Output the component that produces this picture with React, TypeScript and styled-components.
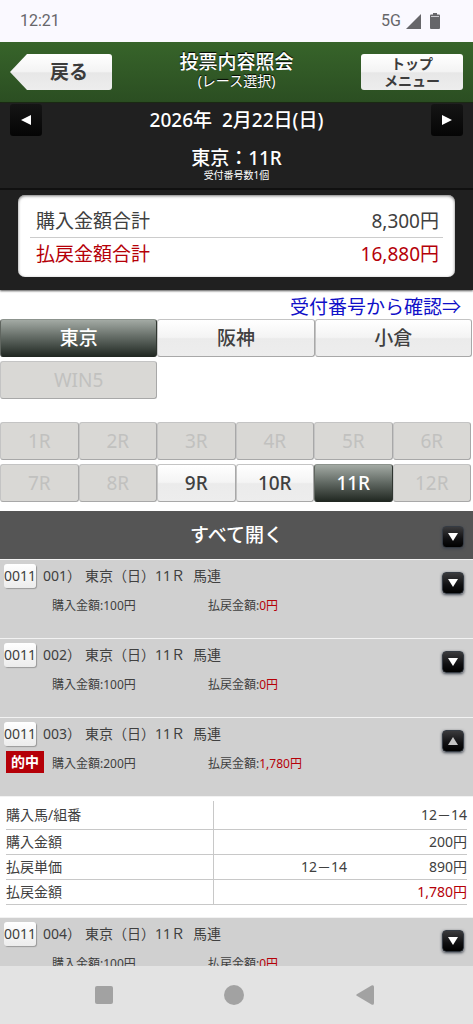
import React, { useState } from "react";
import styled, { createGlobalStyle, css } from "styled-components";

const sans = `"Noto Sans", "Noto Sans CJK JP", sans-serif`;
const RED = "#b50008";
const INK = "#404040";

const GlobalStyle = createGlobalStyle`
  *, *::before, *::after { box-sizing: border-box; }
  body { margin: 0; background: #fff; font-family: ${sans}; color: ${INK}; }
  button { font-family: inherit; padding: 0; margin: 0; border: 0; cursor: pointer; }
  h1, h2, p, dl, dd, ul { margin: 0; padding: 0; font-weight: 400; }
  ul { list-style: none; }
`;

const Screen = styled.div`
  display: flex;
  flex-direction: column;
  height: 100vh;
`;

const StatusBar = styled.div`
  flex: none;
  display: flex;
  align-items: center;
  justify-content: space-between;
  height: 42px;
  padding: 0 33px 0 20px;
  background: #faf9ff;
  color: #66666a;
  font: 16px/20px Roboto, sans-serif;
`;

const StatusIcons = styled.div`
  display: flex;
  align-items: center;
  gap: 5px;
  svg + svg { margin-left: 4px; }
`;

const Content = styled.main`
  flex: 1;
  min-height: 0;
  overflow: hidden;
`;

const Header = styled.header`
  display: flex;
  align-items: center;
  justify-content: space-between;
  height: 61px;
  padding: 0 10px;
  background: linear-gradient(#37642a, #2b4e22);
  border-bottom: 1px solid #16260f;
`;

const plate = css`
  height: 36px;
  border-radius: 3px;
  background: linear-gradient(#fff 0, #f3f3f3 50%, #e7e7e7 52%, #ededed 100%);
  color: #3c3c3c;
  font-weight: 700;
`;

const BackButton = styled.button`
  ${plate}
  width: 102px;
  padding-left: 16px;
  clip-path: polygon(0 50%, 17px 0, 100% 0, 100% 100%, 17px 100%);
  font-size: 19px;
  line-height: 36px;
`;

const MenuButton = styled.button`
  ${plate}
  width: 102px;
  font-size: 14px;
  line-height: 17px;
`;

const TitleBlock = styled.div`
  padding-bottom: 4px;
  text-align: center;
  color: #fff;
  text-shadow: 0 -1px 1px #000;
  h1 { font-size: 19px; line-height: 22px; font-weight: 500; }
  p { font-size: 14px; line-height: 16px; }
`;

const Summary = styled.section`
  background: #202020;
  color: #fff;
  box-shadow: 0 1px 2px #555;
`;

const DateRow = styled.div`
  display: flex;
  align-items: flex-start;
  justify-content: space-between;
  padding: 1px 10px 0;
  h2 { font-size: 19px; line-height: 32px; white-space: pre; font-weight: 500; }
`;

const DayButton = styled.button`
  display: grid;
  place-items: center;
  width: 32px;
  height: 32px;
  border-radius: 3px;
  background: linear-gradient(#151515, #050505);
`;

const RaceHeading = styled.div`
  padding: 11px 0 7px;
  text-align: center;
  border-bottom: 2px solid #101010;
  h2 { font-size: 19px; line-height: 22px; font-weight: 500; }
  p { font-size: 10px; line-height: 12px; }
`;

const TotalsWrap = styled.div`
  padding: 5px 18px 13px;
`;

const Totals = styled.dl`
  padding: 10px 12px 7px;
  border-radius: 7px;
  background: #fff;
  box-shadow: inset 0 1px 3px #777;
`;

const TotalRow = styled.div<{ $paid?: boolean }>`
  display: flex;
  justify-content: space-between;
  padding: 0 4px 0 6px;
  font-size: 19px;
  line-height: 32px;
  color: ${(p) => (p.$paid ? RED : INK)};
  & + & { border-top: 1px solid #ccc; }
`;

const LinkRow = styled.div`
  display: flex;
  justify-content: flex-end;
  padding: 5px 12px 2px;
`;

const ReceiptLink = styled.a`
  font: 19px/22px "Noto Sans CJK JP", sans-serif;
  color: #1010c8;
  text-decoration: none;
`;

const TabGrid = styled.div<{ $columns: number }>`
  display: grid;
  grid-template-columns: repeat(${(p) => p.$columns}, 1fr);
  row-gap: 4px;
  padding: ${(p) => (p.$columns === 3 ? "0 1px 23px 0" : "0 2px 9px 0")};
`;

const Tab = styled.button<{ $active?: boolean }>`
  height: 38px;
  border: 1px solid #c4c4c4;
  border-right-color: #a8a8a8;
  border-bottom-color: #a8a8a8;
  border-radius: 3px;
  background: linear-gradient(#fff 0, #f4f4f4 48%, #ebebeb 52%, #ededed 100%);
  color: ${INK};
  font-size: 19px;
  line-height: 36px;
  font-weight: 500;
  &:disabled {
    background: #d9d8d5;
    color: #c1c1bf;
    font-weight: 400;
    cursor: default;
  }
  ${(p) =>
    p.$active &&
    css`
      background: linear-gradient(#a3aaa4, #606862 50%, #222923);
      border-color: #8c938d #303630 #222822 #606660;
      color: #fff;
    `}
`;

const OpenAll = styled.div`
  display: grid;
  grid-template-columns: 1fr auto 1fr;
  align-items: center;
  height: 48px;
  padding: 0 9px;
  background: #555;
  color: #fff;
  font-size: 19px;
  line-height: 24px;
  font-weight: 500;
  button { grid-column: 3; justify-self: end; margin-top: 3px; }
  span { grid-column: 2; }
`;

const SquareButton = styled.button`
  display: grid;
  place-items: center;
  width: 22px;
  height: 22px;
  border: 1px solid #353b43;
  border-radius: 4px;
  background: linear-gradient(#3a3a3c, #101012 60%, #000);
  box-shadow: 0 1px 3px #3d434e;
`;

const BetHead = styled.div`
  display: flex;
  align-items: flex-start;
  justify-content: space-between;
  height: 79px;
  padding: 4px 9px 0 4px;
  border-top: 1px solid #f2f2f2;
  background: #d0d0d0;
  ${SquareButton} { margin-top: 8px; }
`;

const BetTitle = styled.div`
  display: flex;
  gap: 7px;
  font-size: 14px;
  line-height: 24px;
  white-space: pre;
`;

const Chip = styled.button`
  width: 32px;
  height: 24px;
  border-radius: 3px;
  background: linear-gradient(#fff, #ececec);
  box-shadow: 1px 1px 1px #999;
  color: ${INK};
  font-size: 14px;
  line-height: 24px;
`;

const BetName = styled.span`
  display: flex;
  gap: 4px;
  span:last-child { margin-left: 4px; }
`;

const Amounts = styled.div`
  display: grid;
  grid-template-columns: 46px 156px auto;
  margin-top: 5px;
  padding-left: 2px;
  font-size: 12px;
  line-height: 26px;
`;

const Hit = styled.strong`
  width: 38px;
  height: 22px;
  background: #b50008;
  color: #fff;
  font-size: 14px;
  line-height: 21px;
  text-align: center;
`;

const Amount = styled.span<{ $column: number }>`
  grid-column: ${(p) => p.$column};
`;

const Red = styled.span`
  color: ${RED};
`;

const Detail = styled.div`
  padding: 4px 6px 12px;
  border-top: 1px solid #f2f2f2;
`;

const DetailTable = styled.table`
  width: 100%;
  border-collapse: collapse;
  table-layout: fixed;
  font-size: 14px;
  line-height: 24px;
  tr { border-bottom: 1px solid #c8c8c8; }
  tr:first-child { line-height: 28px; }
  th, td { padding: 0; font-weight: 400; }
  th { width: 45%; text-align: left; border-right: 1px solid #c8c8c8; }
  td { text-align: right; }
  td:nth-child(2) { width: 29%; }
`;

const NavBar = styled.nav`
  flex: none;
  display: grid;
  grid-template-columns: repeat(3, 1fr);
  place-items: center;
  height: 58px;
  padding: 0 43px 0 39px;
  background: #e3e3e3;
  button { display: grid; background: none; }
`;

type Dir = "up" | "down" | "left" | "right";

const shapes: Record<Dir, string> = {
  up: "M5 1 10 9H0Z",
  down: "M0 1H10L5 9Z",
  left: "M0 5 10 0V10Z",
  right: "M0 0 10 5 0 10Z",
};

const Triangle = ({ dir }: { dir: Dir }) => (
  <svg width="10" height="10" viewBox="0 0 10 10" aria-hidden="true">
    <path d={shapes[dir]} fill={dir === "up" ? "#c4c4c4" : "#fff"} />
  </svg>
);

const venues = [
  { name: "東京" },
  { name: "阪神" },
  { name: "小倉" },
  { name: "WIN5", disabled: true },
];
const races = Array.from({ length: 12 }, (_, i) => i + 1);
const openRaces = [9, 10, 11];

const bets = [
  { no: "001", stake: "100円", paid: "0円" },
  { no: "002", stake: "100円", paid: "0円" },
  { no: "003", stake: "200円", paid: "1,780円", hit: true },
  { no: "004", stake: "100円", paid: "0円" },
];

export default function App() {
  const [venue, setVenue] = useState("東京");
  const [race, setRace] = useState(11);
  const [opened, setOpened] = useState<string[]>(["003"]);
  const toggle = (no: string) =>
    setOpened((o) => (o.includes(no) ? o.filter((n) => n !== no) : [...o, no]));

  return (
    <Screen>
      <GlobalStyle />
      <StatusBar>
        <span>12:21</span>
        <StatusIcons>
          <span>5G</span>
          <svg width="15" height="15" viewBox="0 0 15 15" aria-hidden="true">
            <path d="M15 0V15H0Z" fill="#66666a" />
          </svg>
          <svg width="10" height="16" viewBox="0 0 10 16" aria-hidden="true">
            <path d="M3 0H7V1.500H9Q10 1.500 10 2.500V15Q10 16 9 16H1Q0 16 0 15V2.500Q0 1.500 1 1.500H3Z" fill="#66666a" />
            <path d="M1 3.500H9" stroke="#c9c9cf" strokeWidth="1" />
          </svg>
        </StatusIcons>
      </StatusBar>

      <Content>
        <Header>
          <BackButton>戻る</BackButton>
          <TitleBlock>
            <h1>投票内容照会</h1>
            <p>(レース選択)</p>
          </TitleBlock>
          <MenuButton>
            トップ
            <br />
            メニュー
          </MenuButton>
        </Header>

        <Summary>
          <DateRow>
            <DayButton aria-label="前の日">
              <Triangle dir="left" />
            </DayButton>
            <h2>{"2026年  2月22日(日)"}</h2>
            <DayButton aria-label="次の日">
              <Triangle dir="right" />
            </DayButton>
          </DateRow>
          <RaceHeading>
            <h2>東京：11R</h2>
            <p>受付番号数1個</p>
          </RaceHeading>
          <TotalsWrap>
            <Totals>
              <TotalRow>
                <dt>購入金額合計</dt>
                <dd>8,300円</dd>
              </TotalRow>
              <TotalRow $paid>
                <dt>払戻金額合計</dt>
                <dd>16,880円</dd>
              </TotalRow>
            </Totals>
          </TotalsWrap>
        </Summary>

        <LinkRow>
          <ReceiptLink href="#receipts">受付番号から確認⇒</ReceiptLink>
        </LinkRow>

        <TabGrid $columns={3}>
          {venues.map((v) => (
            <Tab
              key={v.name}
              disabled={v.disabled}
              $active={v.name === venue}
              onClick={() => setVenue(v.name)}
            >
              {v.name}
            </Tab>
          ))}
        </TabGrid>
        <TabGrid $columns={6}>
          {races.map((r) => (
            <Tab
              key={r}
              disabled={!openRaces.includes(r)}
              $active={r === race}
              onClick={() => setRace(r)}
            >
              {`${r}R`}
            </Tab>
          ))}
        </TabGrid>

        <OpenAll>
          <span>すべて開く</span>
          <SquareButton
            aria-label="すべて開く"
            onClick={() => setOpened(bets.map((b) => b.no))}
          >
            <Triangle dir="down" />
          </SquareButton>
        </OpenAll>

        <ul>
          {bets.map((b) => {
            const isOpen = opened.includes(b.no);
            return (
              <li key={b.no}>
                <BetHead>
                  <div>
                    <BetTitle>
                      <Chip>0011</Chip>
                      <BetName>
                        <span>{`${b.no}）`}</span>
                        <span>東京（日）11Ｒ</span>
                        <span>馬連</span>
                      </BetName>
                    </BetTitle>
                    <Amounts>
                      {b.hit && <Hit>的中</Hit>}
                      <Amount $column={2}>購入金額:{b.stake}</Amount>
                      <Amount $column={3}>
                        払戻金額:<Red>{b.paid}</Red>
                      </Amount>
                    </Amounts>
                  </div>
                  <SquareButton
                    aria-label={isOpen ? "閉じる" : "開く"}
                    aria-expanded={isOpen}
                    onClick={() => toggle(b.no)}
                  >
                    <Triangle dir={isOpen ? "up" : "down"} />
                  </SquareButton>
                </BetHead>
                {isOpen && (
                  <Detail>
                    <DetailTable>
                      <tbody>
                        <tr>
                          <th scope="row">購入馬/組番</th>
                          <td />
                          <td>12－14</td>
                        </tr>
                        <tr>
                          <th scope="row">購入金額</th>
                          <td />
                          <td>{b.stake}</td>
                        </tr>
                        <tr>
                          <th scope="row">払戻単価</th>
                          <td>12－14</td>
                          <td>890円</td>
                        </tr>
                        <tr>
                          <th scope="row">払戻金額</th>
                          <td />
                          <td>
                            <Red>{b.paid}</Red>
                          </td>
                        </tr>
                      </tbody>
                    </DetailTable>
                  </Detail>
                )}
              </li>
            );
          })}
        </ul>
      </Content>

      <NavBar>
        <button aria-label="履歴">
          <svg width="18" height="18" viewBox="0 0 18 18">
            <rect width="18" height="18" rx="2" fill="#a2a2a2" />
          </svg>
        </button>
        <button aria-label="ホーム">
          <svg width="20" height="20" viewBox="0 0 20 20">
            <circle cx="10" cy="10" r="10" fill="#a2a2a2" />
          </svg>
        </button>
        <button aria-label="戻る">
          <svg width="18" height="20" viewBox="0 0 18 20">
            <path d="M.8 9.200 15.500.400Q18-.5 18 2V18Q18 20.500 15.500 19.600L.8 10.800Q-.4 10 .8 9.200Z" fill="#a2a2a2" />
          </svg>
        </button>
      </NavBar>
    </Screen>
  );
}
